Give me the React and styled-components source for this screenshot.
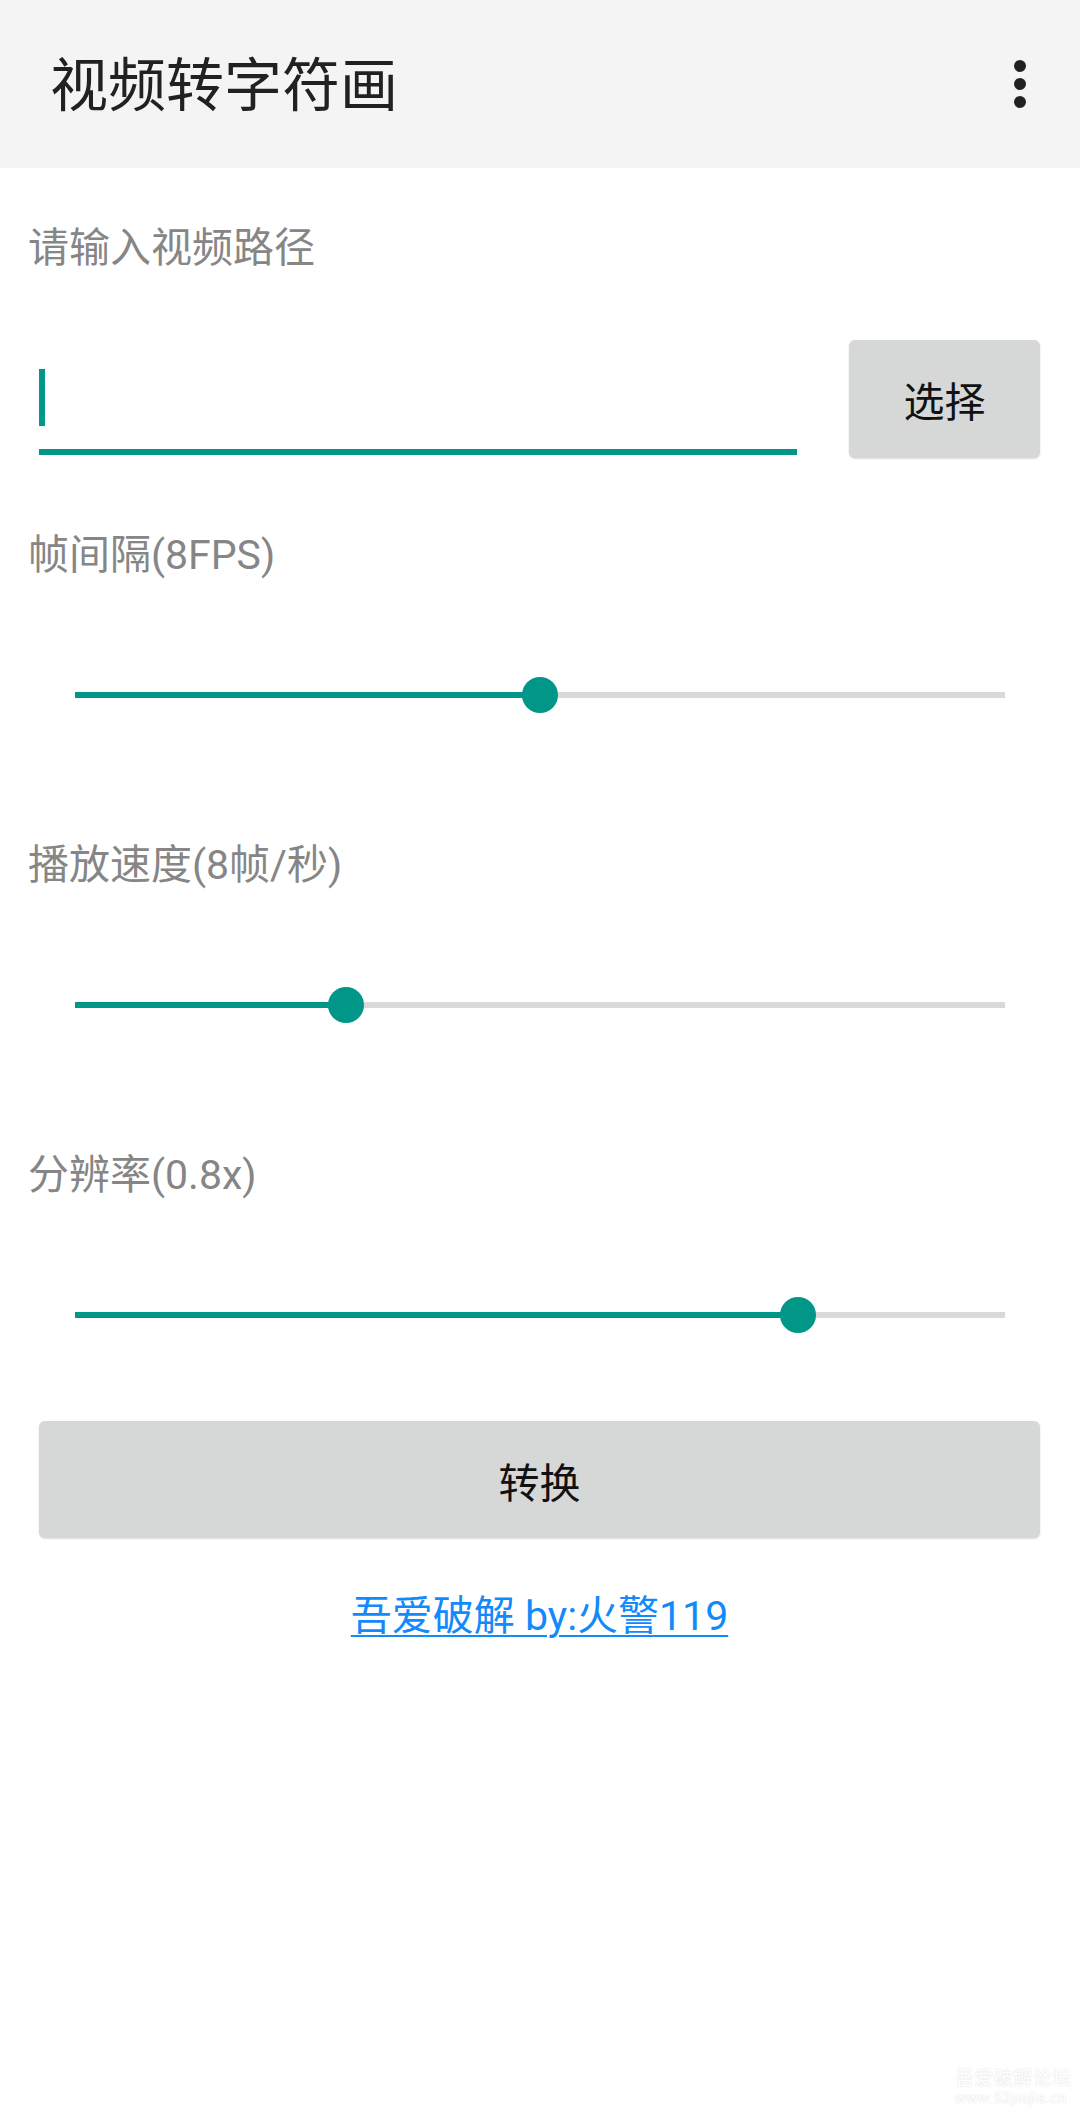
import React from 'react';
import styled, { createGlobalStyle } from 'styled-components';

const teal = '#009688';

const GlobalStyle = createGlobalStyle`
    html, body {
        margin: 0;
        padding: 0;
        background: #ffffff;
    }
    body {
        font-family: Roboto, "Noto Sans CJK SC", sans-serif;
    }
`;

const Screen = styled.div`
    position: relative;
    min-height: 2115px;
    background: #ffffff;
    display: flex;
    flex-direction: column;
`;

const AppBar = styled.header`
    height: 168px;
    background: #f4f4f4;
    display: flex;
    align-items: center;
    justify-content: space-between;
    padding: 0 54px 0 50px;
    box-sizing: border-box;
`;

const Title = styled.h1`
    margin: 0;
    font-size: 58px;
    line-height: 58px;
    font-weight: 400;
    color: #212121;
    padding-top: 4px;
`;

const MenuButton = styled.button`
    border: none;
    background: none;
    padding: 0;
    display: flex;
    cursor: pointer;
`;

const Content = styled.main`
    display: flex;
    flex-direction: column;
    padding: 59px 40px 0 29px;
`;

const Label = styled.div`
    font-size: 41px;
    line-height: 42px;
    color: #868686;
    margin-left: -1px;
    margin-top: ${(props) => props.$top || 0}px;
`;

const EditRow = styled.div`
    display: flex;
    align-items: flex-start;
    margin-top: 71px;
    height: 118px;
`;

const EditField = styled.div`
    flex: 1;
    margin: 0 52px 0 10px;
    height: 118px;
    display: flex;
    flex-direction: column;
    padding-top: 29px;
    box-sizing: border-box;
`;

const Cursor = styled.span`
    width: 6px;
    height: 57px;
    background: ${teal};
`;

const Underline = styled.span`
    margin-top: 23px;
    height: 6px;
    background: ${teal};
`;

const GreyButton = styled.button`
    border: none;
    border-radius: 6px;
    background: #d6d7d7;
    box-shadow: 0 1px 2px rgba(0, 0, 0, 0.14);
    font-family: Roboto, "Noto Sans CJK SC", sans-serif;
    font-size: 41px;
    color: #111111;
    cursor: pointer;
    padding: 0;
    width: ${(props) => (props.$width ? `${props.$width}px` : 'auto')};
    height: ${(props) => props.$height}px;
    margin-top: ${(props) => props.$top || 0}px;
    margin-left: ${(props) => props.$left || 0}px;
`;

const SliderBox = styled.div`
    position: relative;
    height: 36px;
    margin: ${(props) => props.$top}px 35px 0 46px;
    display: flex;
    align-items: center;
`;

const Track = styled.div`
    position: relative;
    flex: 1;
    height: 6px;
    background: #d9d9d9;
`;

const Fill = styled.div`
    height: 100%;
    background: ${teal};
`;

const Thumb = styled.span`
    position: absolute;
    top: 50%;
    width: 36px;
    height: 36px;
    border-radius: 50%;
    background: ${teal};
    transform: translate(-50%, -50%);
`;

const LinkText = styled.a`
    align-self: center;
    margin-top: 57px;
    margin-left: 10px;
    font-size: 41px;
    line-height: 42px;
    color: #138afc;
    text-decoration: underline;
    text-decoration-thickness: 2px;
    text-underline-offset: 5px;
    cursor: pointer;
`;

const Watermark = styled.div`
    position: absolute;
    right: 8px;
    bottom: 8px;
    display: flex;
    flex-direction: column;
    align-items: flex-start;
    color: #ffffff;
    text-shadow: 0 0 2px rgba(0, 0, 0, 0.16);
    line-height: 1.15;
`;

const WatermarkTitle = styled.span`
    font-size: 19px;
    letter-spacing: 0.5px;
`;

const WatermarkUrl = styled.span`
    font-size: 15px;
    letter-spacing: 0.4px;
`;

function Slider({ value, top }) {
    const pct = `${value * 100}%`;
    return (
        <SliderBox $top={top}>
            <Track>
                <Fill style={{ width: pct }} />
                <Thumb style={{ left: pct }} />
            </Track>
        </SliderBox>
    );
}

const sliders = [
    { label: '帧间隔(8FPS)', value: 0.5, labelTop: 76 },
    { label: '播放速度(8帧/秒)', value: 0.2917, labelTop: 131 },
    { label: '分辨率(0.8x)', value: 0.7778, labelTop: 131 },
];

function App() {
    return (
        <Screen>
            <GlobalStyle />
            <AppBar>
                <Title>视频转字符画</Title>
                <MenuButton aria-label="更多">
                    <svg width="12" height="48" viewBox="0 0 12 48">
                        <circle cx="6" cy="6" r="6" fill="#212121" />
                        <circle cx="6" cy="24" r="6" fill="#212121" />
                        <circle cx="6" cy="42" r="6" fill="#212121" />
                    </svg>
                </MenuButton>
            </AppBar>
            <Content>
                <Label>请输入视频路径</Label>
                <EditRow>
                    <EditField>
                        <Cursor />
                        <Underline />
                    </EditField>
                    <GreyButton $width={191} $height={118}>
                        选择
                    </GreyButton>
                </EditRow>
                {sliders.map((s) => (
                    <React.Fragment key={s.label}>
                        <Label $top={s.labelTop}>{s.label}</Label>
                        <Slider value={s.value} top={101} />
                    </React.Fragment>
                ))}
                <GreyButton $height={117} $top={88} $left={10}>
                    转换
                </GreyButton>
                <LinkText>吾爱破解 by:火警119</LinkText>
            </Content>
            <Watermark>
                <WatermarkTitle>吾爱破解论坛</WatermarkTitle>
                <WatermarkUrl>www.52pojie.cn</WatermarkUrl>
            </Watermark>
        </Screen>
    );
}

export default App;
